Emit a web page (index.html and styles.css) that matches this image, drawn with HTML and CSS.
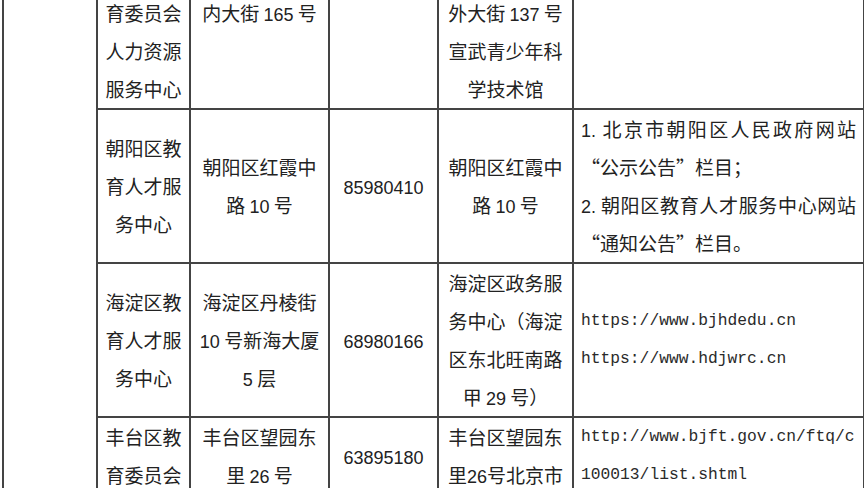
FILE: index.html
```html
<!DOCTYPE html>
<html lang="zh-CN">
<head>
<meta charset="utf-8">
<title>招聘报名点</title>
<link rel="stylesheet" href="styles.css">
</head>
<body>
<table class="grid">
  <colgroup>
    <col class="c0"><col class="c1"><col class="c2"><col class="c3"><col class="c4"><col class="c5">
  </colgroup>
  <tbody>
    <tr>
      <td rowspan="4" class="blank"></td>
      <td>西城区教<br>育委员会<br>人力资源<br>服务中心</td>
      <td class="top">西城区德胜门<br>内大街 <span class="n">165</span> 号</td>
      <td class="top"></td>
      <td>西城区宣武门<br>外大街 <span class="n">137</span> 号<br>宣武青少年科<br>学技术馆</td>
      <td class="top links"></td>
    </tr>
    <tr>
      <td>朝阳区教<br>育人才服<br>务中心</td>
      <td>朝阳区红霞中<br>路 <span class="n">10</span> 号</td>
      <td><span class="n">85980410</span></td>
      <td>朝阳区红霞中<br>路 <span class="n">10</span> 号</td>
      <td class="links">
        <div class="just"><span class="n">1.</span> 北京市朝阳区人民政府网站</div>
        <div>“公示公告”栏目；</div>
        <div class="just"><span class="n">2.</span> 朝阳区教育人才服务中心网站</div>
        <div>“通知公告”栏目。</div>
      </td>
    </tr>
    <tr>
      <td>海淀区教<br>育人才服<br>务中心</td>
      <td>海淀区丹棱街<br><span class="n">10</span> 号新海大厦<br><span class="n">5</span> 层</td>
      <td><span class="n">68980166</span></td>
      <td>海淀区政务服<br>务中心（海淀<br>区东北旺南路<br>甲 <span class="n">29</span> 号）</td>
      <td class="links mono">https://www.bjhdedu.cn<br>https://www.hdjwrc.cn</td>
    </tr>
    <tr>
      <td>丰台区教<br>育委员会</td>
      <td>丰台区望园东<br>里 <span class="n">26</span> 号</td>
      <td><span class="n">63895180</span></td>
      <td>丰台区望园东<br>里<span class="n">26</span>号北京市</td>
      <td class="links mono">http://www.bjft.gov.cn/ftq/c<br>100013/list.shtml</td>
    </tr>
  </tbody>
</table>
</body>
</html>
```

FILE: styles.css
```css
html, body {
  margin: 0;
  padding: 0;
  background: #ffffff;
}

body {
  width: 864px;
  height: 488px;
  overflow: hidden;
}

.grid {
  margin: -46px 0 0 2px;
  border-collapse: collapse;
  table-layout: fixed;
  width: 861px;
  font-family: "Noto Sans CJK SC", sans-serif;
  font-size: 19px;
  line-height: 38px;
  color: #222222;
}

.c0 { width: 94px; }
.c1 { width: 93px; }
.c2 { width: 139px; }
.c3 { width: 109px; }
.c4 { width: 135px; }
.c5 { width: 291px; }

.grid td {
  border: 2px solid #444444;
  padding: 0 4px;
  text-align: center;
  vertical-align: middle;
  white-space: nowrap;
}

.grid td.top {
  vertical-align: top;
}

.grid td.links {
  text-align: left;
  padding: 0 7px 0 7px;
}

.just {
  text-align: justify;
  text-align-last: justify;
}

.n {
  font-family: "Liberation Sans", Arial, sans-serif;
  font-size: 18px;
  line-height: 1;
}

.mono {
  font-family: "Liberation Mono", monospace;
  font-size: 16.3px;
  color: #2a2a2a;
}
```
